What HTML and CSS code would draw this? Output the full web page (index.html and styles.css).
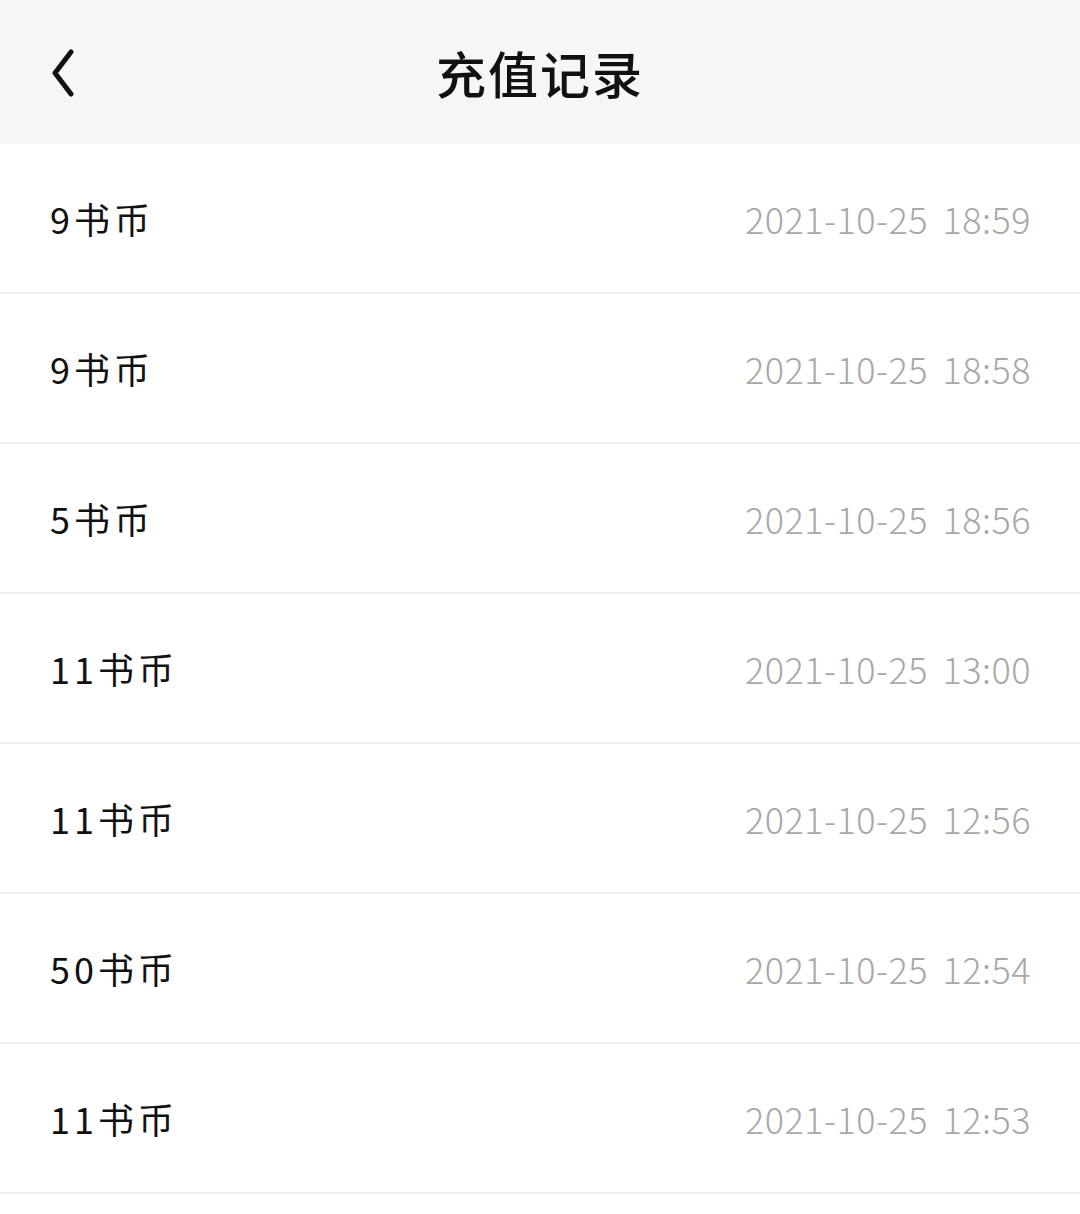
FILE: index.html
```html
<!DOCTYPE html>
<html lang="zh-CN">
<head>
  <meta charset="UTF-8">
  <meta name="viewport" content="width=device-width, initial-scale=1.0">
  <title>充值记录</title>
  <link rel="stylesheet" href="styles.css">
</head>
<body>
  <div class="header">
    <button class="back" aria-label="返回">
      <svg width="30" height="50" viewBox="0 0 30 50">
        <path d="M24 3 L8 24 L24 45" fill="none" stroke="#111" stroke-width="5" stroke-linecap="round" stroke-linejoin="round"/>
      </svg>
    </button>
    <div class="title">充值记录</div>
  </div>

  <ul class="records">
    <li class="record"><span class="amount">9书币</span><span class="time">2021-10-25 18:59</span></li>
    <li class="record"><span class="amount">9书币</span><span class="time">2021-10-25 18:58</span></li>
    <li class="record"><span class="amount">5书币</span><span class="time">2021-10-25 18:56</span></li>
    <li class="record"><span class="amount">11书币</span><span class="time">2021-10-25 13:00</span></li>
    <li class="record"><span class="amount">11书币</span><span class="time">2021-10-25 12:56</span></li>
    <li class="record"><span class="amount">50书币</span><span class="time">2021-10-25 12:54</span></li>
    <li class="record"><span class="amount">11书币</span><span class="time">2021-10-25 12:53</span></li>
  </ul>
</body>
</html>
```

FILE: styles.css
```css
body {
  margin: 0;
  background: #fff;
  font-family: "Noto Sans CJK SC", "Noto Sans", sans-serif;
}

.header {
  height: 144px;
  background-color: #f6f6f6;
  display: flex;
  align-items: center;
  justify-content: center;
  position: relative;
}

.back {
  position: absolute;
  left: 47px;
  top: 49px;
  border: none;
  background: none;
  padding: 0;
  cursor: pointer;
}

.back svg {
  display: block;
}

.title {
  font-size: 50px;
  font-weight: 500;
  color: #111;
  letter-spacing: 2px;
}

.records {
  list-style: none;
  margin: 0;
  padding: 0;
}

.record {
  height: 148px;
  border-bottom: 2px solid #efefef;
  display: flex;
  align-items: center;
  justify-content: space-between;
  padding: 0 49px 0 50px;
}

.amount {
  font-size: 36px;
  color: #111;
  letter-spacing: 4px;
}

.time {
  font-size: 36px;
  font-weight: 300;
  color: #a8a8a8;
  letter-spacing: 0.5px;
  word-spacing: 6px;
}
```
